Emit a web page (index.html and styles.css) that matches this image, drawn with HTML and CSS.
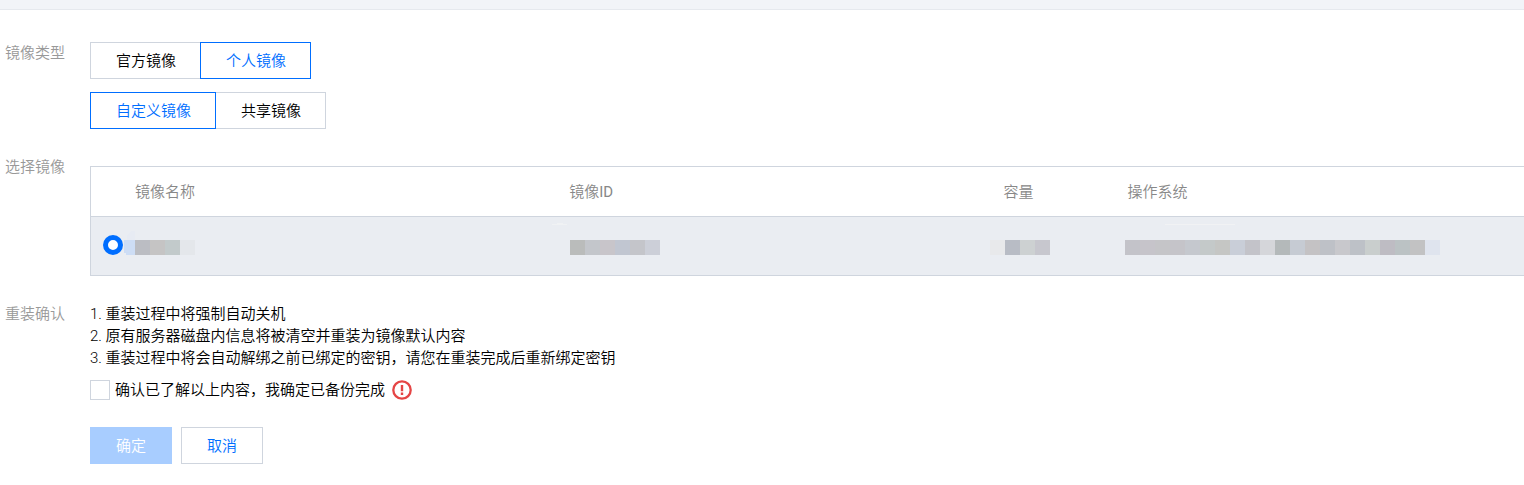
FILE: index.html
```html
<!DOCTYPE html>
<html lang="zh-CN">
<head>
<meta charset="utf-8">
<title>重装系统</title>
<link rel="stylesheet" href="styles.css">
</head>
<body>
<div class="topbar"></div>
<main class="form">
  <section class="row row-type">
    <div class="label">镜像类型</div>
    <div class="field segments">
      <div class="segment">
        <button type="button" class="seg">官方镜像</button>
        <button type="button" class="seg active">个人镜像</button>
      </div>
      <div class="segment">
        <button type="button" class="seg active">自定义镜像</button>
        <button type="button" class="seg">共享镜像</button>
      </div>
    </div>
  </section>

  <section class="row row-image">
    <div class="label">选择镜像</div>
    <div class="field">
      <table class="table">
        <colgroup><col class="c-radio"><col class="c-wide"><col class="c-wide"><col class="c-size"><col></colgroup>
        <thead>
          <tr><th></th><th>镜像名称</th><th>镜像ID</th><th>容量</th><th>操作系统</th></tr>
        </thead>
        <tbody>
          <tr>
            <td class="pick"><input type="radio" class="radio" name="image" aria-label="选择该镜像" checked></td>
            <td><svg class="mosaic m-name" width="72" height="32" shape-rendering="crispEdges" aria-hidden="true">
              <path d="M4 12L8 8h4v9H4z" fill="#e7ebf3"/>
              <path d="M1 17h11v15H3v-2H1z" fill="#cdddf5"/>
              <rect x="12" y="17" width="15" height="15" fill="#bbbdc3"/><rect x="27" y="17" width="15" height="15" fill="#c5c4c4"/><rect x="42" y="17" width="15" height="15" fill="#c2cacb"/><rect x="57" y="17" width="15" height="15" fill="#e4e7eb"/>
            </svg></td>
            <td><svg class="mosaic m-id" width="108" height="32" shape-rendering="crispEdges" aria-hidden="true">
              <path d="M0 1h15v1H0zM5 0h6v1H5z" fill="#f0f2f4"/>
              <rect x="18" y="17" width="15" height="15" fill="#babcbb"/><rect x="33" y="17" width="15" height="15" fill="#c3c6cb"/><rect x="48" y="17" width="15" height="15" fill="#c8c5ca"/><rect x="63" y="17" width="15" height="15" fill="#c1c6d1"/><rect x="78" y="17" width="15" height="15" fill="#c4c5ca"/><rect x="93" y="17" width="15" height="15" fill="#cccfd8"/>
            </svg></td>
            <td><svg class="mosaic m-size" width="60" height="32" shape-rendering="crispEdges" aria-hidden="true">
              <rect x="0" y="17" width="15" height="15" fill="#e8e9eb"/><rect x="15" y="17" width="15" height="15" fill="#b8bcc5"/><rect x="30" y="17" width="15" height="15" fill="#cdd1d2"/><rect x="45" y="17" width="15" height="15" fill="#c7c7ce"/>
            </svg></td>
            <td><svg class="mosaic m-os" width="315" height="32" shape-rendering="crispEdges" aria-hidden="true">
              <rect x="40" y="1" width="70" height="1" fill="#f1f2f4"/>
              <rect x="0" y="17" width="15" height="15" fill="#c3c3c9"/><rect x="15" y="17" width="15" height="15" fill="#c6c4ca"/><rect x="30" y="17" width="15" height="15" fill="#c5c5c8"/><rect x="45" y="17" width="15" height="15" fill="#c5c4c9"/><rect x="60" y="17" width="15" height="15" fill="#c5c8ce"/><rect x="75" y="17" width="15" height="15" fill="#c4c9c9"/><rect x="90" y="17" width="15" height="15" fill="#c5c6c4"/><rect x="105" y="17" width="15" height="15" fill="#c9ced8"/><rect x="120" y="17" width="15" height="15" fill="#c3c3c9"/><rect x="135" y="17" width="15" height="15" fill="#d5d6da"/><rect x="150" y="17" width="15" height="15" fill="#b4b9ba"/><rect x="165" y="17" width="15" height="15" fill="#c6cbd3"/><rect x="180" y="17" width="15" height="15" fill="#c4c2c4"/><rect x="195" y="17" width="15" height="15" fill="#bec1c7"/><rect x="210" y="17" width="15" height="15" fill="#c8c8cc"/><rect x="225" y="17" width="15" height="15" fill="#bdc1c7"/><rect x="240" y="17" width="15" height="15" fill="#c9cecd"/><rect x="255" y="17" width="15" height="15" fill="#bebcc3"/><rect x="270" y="17" width="15" height="15" fill="#bbc2c4"/><rect x="285" y="17" width="15" height="15" fill="#c2c2c3"/><rect x="300" y="17" width="15" height="15" fill="#dfe4ee"/>
            </svg></td>
          </tr>
        </tbody>
      </table>
    </div>
  </section>

  <section class="row row-confirm">
    <div class="label">重装确认</div>
    <div class="field">
      <p class="note">1. 重装过程中将强制自动关机</p>
      <p class="note">2. 原有服务器磁盘内信息将被清空并重装为镜像默认内容</p>
      <p class="note">3. 重装过程中将会自动解绑之前已绑定的密钥，请您在重装完成后重新绑定密钥</p>
      <div class="agree">
        <input type="checkbox" class="checkbox" id="agree">
        <label class="agree-text" for="agree">确认已了解以上内容，我确定已备份完成</label>
        <svg class="warn" width="20" height="20" viewBox="0 0 20 20" aria-hidden="true">
          <circle cx="10" cy="10" r="8.7" fill="none" stroke="#e54545" stroke-width="2.3"/>
          <path d="M8.8 5h2.4v6.2H8.8zM8.8 12.6h2.4V15H8.8z" fill="#e54545"/>
        </svg>
      </div>
      <div class="actions">
        <button type="button" class="btn primary" disabled>确定</button>
        <button type="button" class="btn">取消</button>
      </div>
    </div>
  </section>
</main>
</body>
</html>
```
FILE: styles.css
```css
* { box-sizing: border-box; }

body {
  margin: 0;
  background: #fff;
  color: #000;
  font: 350 15px/22px Roboto, "Noto Sans CJK SC DemiLight", "Noto Sans CJK SC", sans-serif;
}

button {
  font: inherit;
  color: inherit;
  cursor: pointer;
}

.topbar {
  height: 10px;
  background: #f2f4f8;
  border-bottom: 1px solid #e6e9ee;
}

.form { padding: 32px 0 20px 5px; }

.row { display: flex; }
.row-image { margin-top: 37px; }
.row-confirm { margin-top: 27px; }

.label {
  flex: none;
  width: 85px;
  color: #999;
}
.row-image .label { margin-top: -10px; }

.field {
  flex: 1;
  min-width: 0;
}

.segments {
  display: grid;
  gap: 13px;
}
.segment { display: flex; }

.seg {
  height: 37px;
  padding: 0 24px 0 25px;
  border: 1px solid #cfd5de;
  background: #fff;
}
.seg + .seg { margin-left: -1px; }
.seg.active {
  z-index: 1;
  border-color: #006eff;
  color: #006eff;
}

.table {
  width: 100%;
  table-layout: fixed;
  border-collapse: separate;
  border-spacing: 0;
  border: 1px solid #cfd5de;
  border-right: 0;
}
.c-radio { width: 44px; }
.c-wide { width: 30.3%; }
.c-size { width: 124px; }

.table th {
  height: 50px;
  padding: 0;
  border-bottom: 1px solid #cfd5de;
  color: #888;
  font-weight: 400;
  text-align: left;
}
.table td {
  height: 58px;
  padding: 6px 0 0;
  background: #eaedf2;
  vertical-align: top;
}
.table .pick { padding: 18px 0 0 12px; }

.radio {
  display: block;
  appearance: none;
  width: 20px;
  height: 20px;
  margin: 0;
  border: 5px solid #006eff;
  border-radius: 50%;
  background: #fff;
}

.mosaic { display: block; }
.m-name { margin-left: -12px; }
.m-id { margin-left: -17px; }
.m-size { margin-left: -13px; }
.m-os { margin-left: -2px; }

.note { margin: 0; }

.agree {
  display: flex;
  align-items: center;
  margin-top: 10px;
}
.checkbox {
  appearance: none;
  width: 20px;
  height: 20px;
  margin: 0 5px 0 0;
  border: 1px solid #cfd5de;
  background: #fff;
}
.warn { margin-left: 7px; }

.actions {
  display: flex;
  gap: 9px;
  margin-top: 26px;
}
.btn {
  width: 82px;
  height: 37px;
  padding: 0;
  border: 1px solid #cfd5de;
  background: #fff;
  color: #006eff;
}
.btn.primary {
  border-color: #a8cdff;
  background: #a8cdff;
  color: #fff;
}
```
